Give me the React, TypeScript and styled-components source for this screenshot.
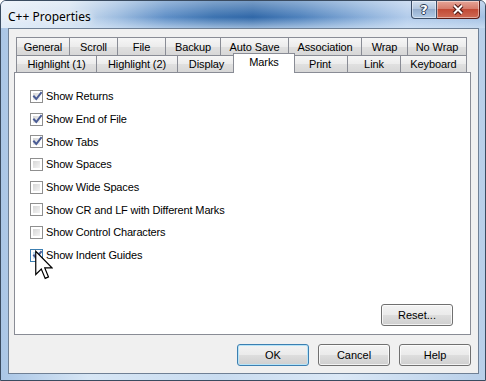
import React from 'react';
import styled, { createGlobalStyle } from 'styled-components';

const GlobalStyle = createGlobalStyle`
  html, body { margin: 0; padding: 0; background: #ffffff; }
  * { box-sizing: border-box; }
`;

const uiFont = `"Liberation Sans", Arial, sans-serif`;

const Window = styled.div`
  position: relative;
  width: 486px;
  height: 381px;
  border: 1px solid #3a4b60;
  border-radius: 6px 6px 0 0;
  overflow: hidden;
  display: flex;
  flex-direction: column;
  background: linear-gradient(to right, #aac6e6 0%, #d7e6f5 18%, #c9dcf0 45%, #dbe8f6 70%, #b8cfe9 100%);
`;

const TitleBar = styled.div`
  height: 27px;
  flex: none;
  display: flex;
  align-items: flex-start;
  justify-content: space-between;
  background:
    linear-gradient(to bottom, rgba(255, 255, 255, 0.35) 0%, rgba(255, 255, 255, 0) 60%, rgba(220, 234, 248, 0.6) 100%),
    linear-gradient(to right, #e6eef8 0%, #d5e3f2 14%, #9ebde0 24%, #5f8fc7 34%, #3b72b0 44%, #2f67a8 52%, #4f82bd 62%, #86acd8 74%, #b3cceb 84%, #a4c1e4 100%);
`;

const Title = styled.span`
  margin: 7px 0 0 7px;
  font: 12px "Noto Sans", "Open Sans", sans-serif;
  color: #000;
  text-shadow: 0 0 6px #ffffff, 0 0 10px #ffffff;
`;

const CaptionButtons = styled.div`
  display: flex;
  margin-right: 5px;
`;

const CaptionButton = styled.div<{ $close?: boolean }>`
  width: ${p => (p.$close ? 43 : 26)}px;
  height: 18px;
  display: flex;
  align-items: center;
  justify-content: center;
  border: 1px solid ${p => (p.$close ? '#5c1c16' : '#3b4d66')};
  border-top: none;
  border-left-width: ${p => (p.$close ? 0 : 1)}px;
  border-radius: ${p => (p.$close ? '0 0 4px 0' : '0 0 0 4px')};
  background: ${p =>
    p.$close
      ? 'linear-gradient(#e6a597 0%, #d67d6c 45%, #c24b36 50%, #cf6a55 100%)'
      : 'linear-gradient(#d4e1f0 0%, #b2c6de 45%, #95aece 50%, #b2cbe6 100%)'};
  box-shadow: inset 0 0 0 1px rgba(255, 255, 255, 0.45);
  font: bold 13px "DejaVu Sans", sans-serif;
  color: #fff;
  text-shadow: 1px 0 0 #2c3e58, -1px 0 0 #2c3e58, 0 1px 0 #2c3e58, 0 -1px 0 #2c3e58;
`;

const Client = styled.div`
  flex: 1;
  margin: 0 6px 6px 7px;
  border: 1px solid #6f8095;
  background: #f0f0f0;
  display: flex;
  flex-direction: column;
  padding: 8px 7px 7px 5px;
`;

const TabRow = styled.div`
  display: flex;
  padding: 0 3px 0 2px;
  position: relative;
  z-index: 2;
`;

const Tab = styled.div<{ $w: number; $h: number; $selected?: boolean }>`
  width: ${p => p.$w + 1}px;
  height: ${p => p.$h}px;
  flex: none;
  position: relative;
  display: flex;
  align-items: ${p => (p.$selected ? 'flex-start' : 'center')};
  justify-content: center;
  padding-top: ${p => (p.$selected ? 2 : 0)}px;
  border: 1px solid #898c95;
  border-bottom: none;
  margin-left: -1px;
  &:first-child { margin-left: 0; width: ${p => p.$w}px; }
  background: ${p =>
    p.$selected ? '#ffffff' : 'linear-gradient(#f6f6f6 0%, #ececec 50%, #e0e0e0 52%, #d7d7d7 100%)'};
  font: 11px ${uiFont};
  letter-spacing: -0.1px;
  color: #000;
  ${p =>
    p.$selected &&
    `
    margin: -2px -2px -1px -3px;
    width: ${p.$w + 5}px;
    z-index: 3;
  `}
`;

const Panel = styled.div`
  flex: 1;
  width: 457px;
  border: 1px solid #898c95;
  background: #ffffff;
  display: flex;
  flex-direction: column;
  padding: 12px 17px 8px 15px;
  position: relative;
  z-index: 1;
`;

const CheckList = styled.div`
  display: flex;
  flex-direction: column;
  flex: 1;
`;

const CheckRow = styled.label`
  height: 22.7px;
  display: flex;
  align-items: center;
  gap: 3px;
  font: 11px ${uiFont};
  letter-spacing: -0.15px;
  color: #000;
`;

const Box = styled.span<{ $hover?: boolean }>`
  position: relative;
  width: 13px;
  height: 13px;
  flex: none;
  border: 1px solid ${p => (p.$hover ? '#3c7fb1' : '#8f8f8f')};
  background: #ffffff;
  padding: 2px;
  display: flex;
`;

const BoxFill = styled.span<{ $hover?: boolean }>`
  flex: 1;
  background: ${p =>
    p.$hover
      ? 'linear-gradient(135deg, #b9dcf0 0%, #e9f6fd 100%)'
      : 'linear-gradient(135deg, #d6d6d6 0%, #f4f4f4 100%)'};
`;

const CheckMark = styled.svg`
  position: absolute;
  left: 1px;
  top: 0;
`;

const Footer = styled.div`
  display: flex;
  justify-content: flex-end;
  gap: 9px;
  margin-top: 9px;
`;

const Button = styled.button<{ $default?: boolean }>`
  width: 72px;
  height: 22px;
  padding: 0;
  border: 1px solid ${p => (p.$default ? '#3c7fb1' : '#707070')};
  border-radius: 3px;
  background: linear-gradient(#f3f3f3 0%, #ebebeb 48%, #dddddd 52%, #cfcfcf 100%);
  box-shadow: inset 0 0 0 1px ${p => (p.$default ? '#b7e4f8' : 'rgba(255, 255, 255, 0.75)')};
  font: 11px ${uiFont};
  color: #000;
`;

const Cursor = styled.svg`
  position: absolute;
  left: 34px;
  top: 249px;
  z-index: 10;
`;

type Check = { label: string; checked: boolean; hover?: boolean };

const topTabs = [
  { label: 'General', w: 54 },
  { label: 'Scroll', w: 48 },
  { label: 'File', w: 48 },
  { label: 'Backup', w: 55 },
  { label: 'Auto Save', w: 68 },
  { label: 'Association', w: 73 },
  { label: 'Wrap', w: 46 },
  { label: 'No Wrap', w: 59 },
];

const frontTabs = [
  { label: 'Highlight (1)', w: 81 },
  { label: 'Highlight (2)', w: 81 },
  { label: 'Display', w: 58 },
  { label: 'Marks', w: 57, selected: true },
  { label: 'Print', w: 55 },
  { label: 'Link', w: 53 },
  { label: 'Keyboard', w: 66 },
];

const marks: Check[] = [
  { label: 'Show Returns', checked: true },
  { label: 'Show End of File', checked: true },
  { label: 'Show Tabs', checked: true },
  { label: 'Show Spaces', checked: false },
  { label: 'Show Wide Spaces', checked: false },
  { label: 'Show CR and LF with Different Marks', checked: false },
  { label: 'Show Control Characters', checked: false },
  { label: 'Show Indent Guides', checked: true, hover: true },
];

const CheckBox = ({ checked, hover }: { checked: boolean; hover?: boolean }) => (
  <Box $hover={hover}>
    <BoxFill $hover={hover} />
    {checked && (
      <CheckMark width="11" height="11" viewBox="0 0 11 11">
        <path d="M2 5.5 L4.3 8 L9 2" fill="none" stroke="#4a5c95" strokeWidth="2" strokeLinecap="square" />
      </CheckMark>
    )}
  </Box>
);

const App = () => {
  return (
    <>
      <GlobalStyle />
      <Window>
        <TitleBar>
          <Title>C++ Properties</Title>
          <CaptionButtons>
            <CaptionButton>?</CaptionButton>
            <CaptionButton $close>
              <svg width="14" height="11" viewBox="0 0 14 11">
                <path d="M3 1.5 L11 9.5 M11 1.5 L3 9.5" stroke="#4a1510" strokeWidth="4" />
                <path d="M3 1.5 L11 9.5 M11 1.5 L3 9.5" stroke="#ffffff" strokeWidth="2" />
              </svg>
            </CaptionButton>
          </CaptionButtons>
        </TitleBar>
        <Client>
          <TabRow>
            {topTabs.map(t => (
              <Tab key={t.label} $w={t.w} $h={18}>
                {t.label}
              </Tab>
            ))}
          </TabRow>
          <TabRow>
            {frontTabs.map(t => (
              <Tab key={t.label} $w={t.w} $h={t.selected ? 20 : 17} $selected={t.selected}>
                {t.label}
              </Tab>
            ))}
          </TabRow>
          <Panel>
            <CheckList>
              {marks.map(m => (
                <CheckRow key={m.label}>
                  <CheckBox checked={m.checked} hover={m.hover} />
                  {m.label}
                </CheckRow>
              ))}
            </CheckList>
            <Footer>
              <Button>Reset...</Button>
            </Footer>
          </Panel>
          <Footer>
            <Button $default>OK</Button>
            <Button>Cancel</Button>
            <Button>Help</Button>
          </Footer>
        </Client>
        <Cursor width="18" height="31" viewBox="0 0 12 20">
          <path d="M0.5 0.5 L0.5 16 L4.2 12.4 L6.8 18.6 L9 17.6 L6.5 11.6 L11.3 11.6 Z" fill="#ffffff" stroke="#000000" strokeWidth="0.8" strokeLinejoin="miter" />
        </Cursor>
      </Window>
    </>
  );
};

export default App;
